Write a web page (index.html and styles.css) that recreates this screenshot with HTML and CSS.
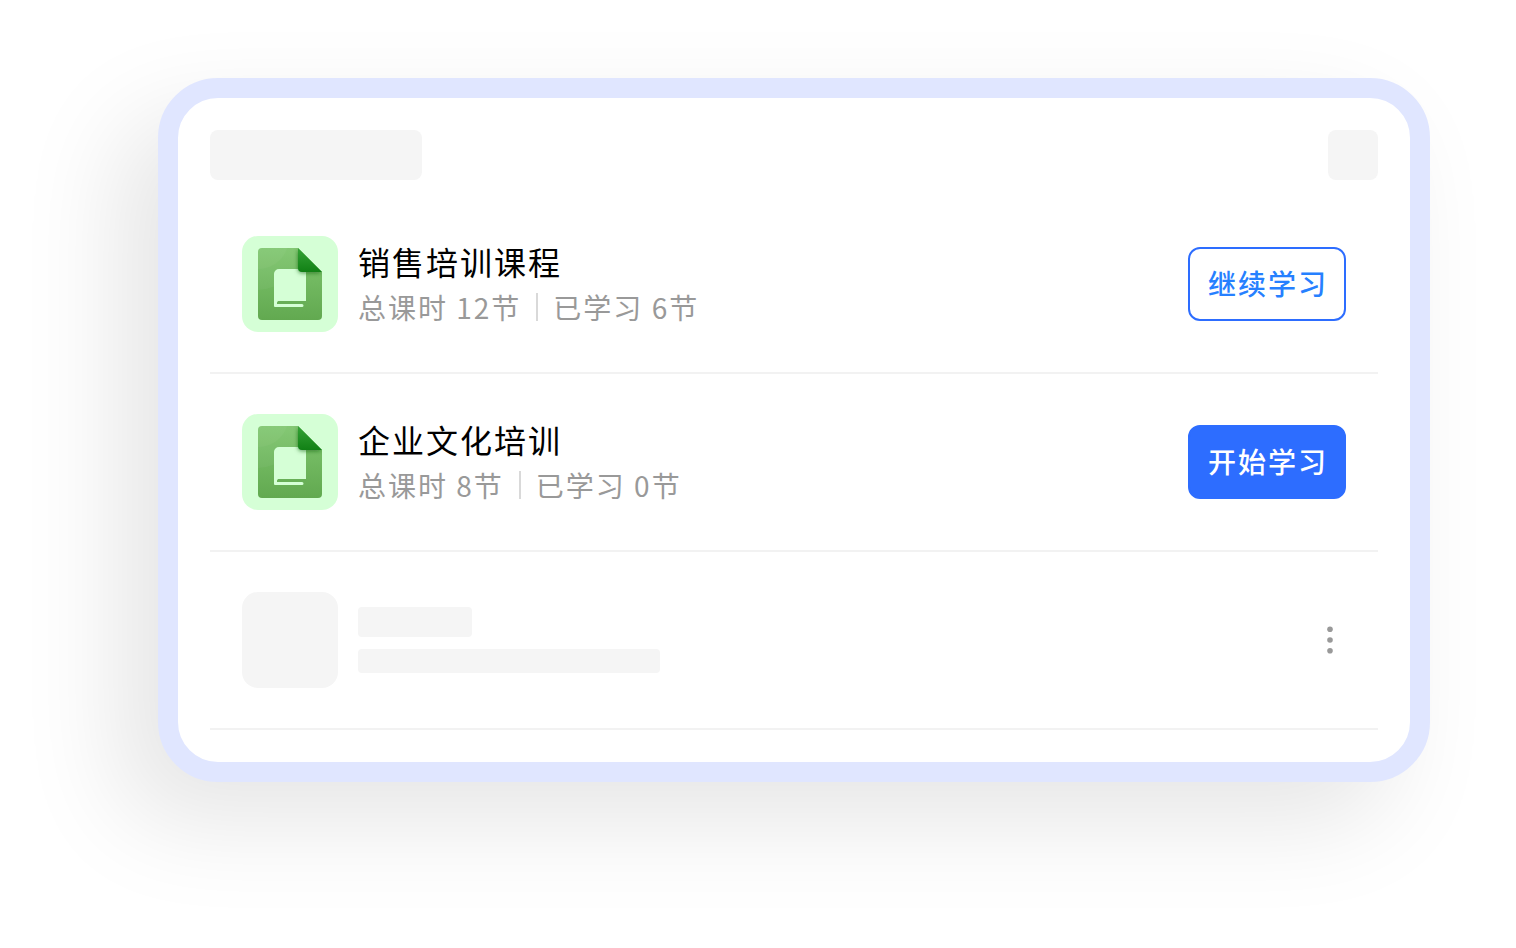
FILE: index.html
```html
<!DOCTYPE html>
<html lang="zh-CN">
<head>
<meta charset="utf-8">
<title>培训课程</title>
<link rel="stylesheet" href="styles.css">
</head>
<body>
<svg class="defs" width="0" height="0" aria-hidden="true">
  <defs>
    <linearGradient id="sheet" x1="0" y1="0" x2="0" y2="1">
      <stop offset="0" stop-color="#7fc66f"/>
      <stop offset="1" stop-color="#62a950"/>
    </linearGradient>
    <linearGradient id="fold" x1="0" y1="0" x2="0" y2="1">
      <stop offset="0" stop-color="#35a337"/>
      <stop offset="1" stop-color="#118015"/>
    </linearGradient>
    <filter id="soft" x="-50%" y="-50%" width="200%" height="200%">
      <feGaussianBlur stdDeviation="2"/>
    </filter>
    <clipPath id="page-clip">
      <path d="M20 12H56L80 36V80a4 4 0 0 1-4 4H20a4 4 0 0 1-4-4V16a4 4 0 0 1 4-4Z"/>
    </clipPath>
    <symbol id="course" viewBox="0 0 96 96">
      <g clip-path="url(#page-clip)">
        <rect x="16" y="12" width="64" height="72" fill="url(#sheet)"/>
        <circle cx="14" cy="3" r="51" fill="#fff" fill-opacity=".04"/>
        <circle cx="16" cy="2" r="31" fill="#fff" fill-opacity=".04"/>
        <path d="M37 33H63a1 1 0 0 1 1 1V65H37C35.500 65 35 66.500 35 68H60a1.500 1.500 0 0 1 0 3H33a1 1 0 0 1-1-1V38a5 5 0 0 1 5-5Z" fill="#d5ffd6"/>
        <path d="M37 65H64V68H35C35 66.500 35.500 65 37 65Z" fill="#68af57"/>
        <path d="M56 13L80 37H60a4 4 0 0 1-4-4Z" fill="#0c5c10" fill-opacity=".65" filter="url(#soft)"/>
      </g>
      <path d="M56 12L80 36H60a4 4 0 0 1-4-4Z" fill="url(#fold)"/>
    </symbol>
  </defs>
</svg>
<main class="card">
  <header class="card-head">
    <span class="block block-title"></span>
    <span class="block block-action"></span>
  </header>
  <ul class="courses">
    <li class="course">
      <span class="thumb"><svg class="thumb-icon" aria-hidden="true"><use href="#course"/></svg></span>
      <div class="info">
        <h2 class="name">销售培训课程</h2>
        <p class="meta"><span>总课时 12节</span><span class="rule"></span><span>已学习 6节</span></p>
      </div>
      <button class="btn btn-outline" type="button">继续学习</button>
    </li>
    <li class="course">
      <span class="thumb"><svg class="thumb-icon" aria-hidden="true"><use href="#course"/></svg></span>
      <div class="info">
        <h2 class="name">企业文化培训</h2>
        <p class="meta"><span>总课时 8节</span><span class="rule"></span><span>已学习 0节</span></p>
      </div>
      <button class="btn btn-solid" type="button">开始学习</button>
    </li>
    <li class="course">
      <span class="thumb thumb-empty"></span>
      <div class="info info-empty">
        <span class="line line-short"></span>
        <span class="line line-long"></span>
      </div>
      <button class="more" type="button" aria-label="更多">
        <svg width="32" height="32" viewBox="0 0 32 32" fill="#999" aria-hidden="true"><circle cx="16" cy="5.300" r="2.800"/><circle cx="16" cy="16" r="2.800"/><circle cx="16" cy="26.700" r="2.800"/></svg>
      </button>
    </li>
  </ul>
</main>
</body>
</html>
```

FILE: styles.css
```css
* {
  box-sizing: border-box;
}

body {
  min-height: 100vh;
  margin: 0;
  padding: 78px 86px 160px 158px;
  background: #fff;
  color: #000;
  font-family: "Noto Sans CJK SC", sans-serif;
  letter-spacing: 2px;
}

.defs {
  position: absolute;
}

.card {
  padding: 32px;
  border: 20px solid #e0e6ff;
  border-radius: 60px;
  background: #fff;
  box-shadow: -40px 40px 100px rgba(0, 0, 0, 0.1);
}

.card-head {
  display: flex;
  justify-content: space-between;
  margin-bottom: 16px;
}

.block {
  height: 50px;
  border-radius: 8px;
  background: #f5f5f5;
}

.block-title {
  width: 212px;
}

.block-action {
  width: 50px;
}

.courses {
  margin: 0;
  padding: 0;
  list-style: none;
}

.course {
  display: flex;
  align-items: center;
  gap: 20px;
  padding: 40px 32px;
  border-bottom: 2px solid #f2f2f2;
}

.thumb {
  flex: none;
  width: 96px;
  height: 96px;
  border-radius: 16px;
  background: #d5ffd6;
}

.thumb-icon {
  display: block;
  width: 96px;
  height: 96px;
}

.thumb-empty {
  background: #f5f5f5;
}

.info {
  flex: 1;
}

.name {
  margin: 0;
  font-size: 32px;
  font-weight: 400;
  line-height: 46px;
}

.meta {
  display: flex;
  align-items: center;
  gap: 15px;
  margin: 0;
  color: #999;
  font-size: 28px;
  line-height: 46px;
}

.rule {
  width: 2px;
  height: 28px;
  background: #d9d9d9;
}

.info-empty {
  display: flex;
  flex-direction: column;
  gap: 12px;
}

.line {
  border-radius: 4px;
  background: #f5f5f5;
}

.line-short {
  width: 114px;
  height: 30px;
}

.line-long {
  width: 302px;
  height: 24px;
}

.btn {
  padding: 13px 16px 15px 18px;
  border: 2px solid #2d6dff;
  border-radius: 12px;
  font-family: inherit;
  font-size: 28px;
  font-weight: 500;
  line-height: 42px;
  letter-spacing: inherit;
}

.btn-outline {
  background: #fff;
  color: #2680ff;
}

.btn-solid {
  background: #2d6dff;
  color: #fff;
}

.more {
  width: 32px;
  height: 32px;
  padding: 0;
  border: 0;
  background: none;
}

.more svg {
  display: block;
}
```
